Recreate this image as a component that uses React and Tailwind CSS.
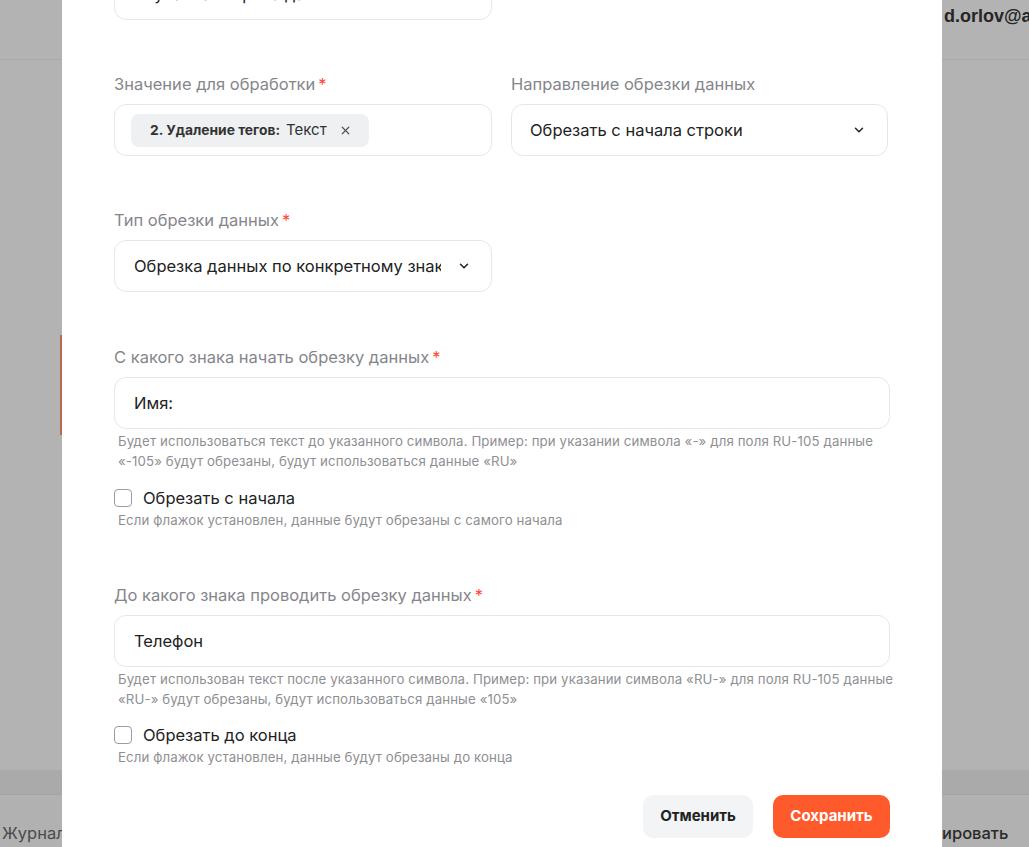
import { ChevronDown, X } from "lucide-react";

function Label({ children, required }) {
  return (
    <div className="h-6 text-[16.5px] leading-6 text-[#85868b] mb-2 whitespace-nowrap">
      {children}
      {required && <span className="ml-[3px] text-[#ff4a35]">*</span>}
    </div>
  );
}

function Field({ children, className = "" }) {
  return (
    <div className={`h-[52px] rounded-xl border border-[#e6e7ea] bg-white flex items-center ${className}`}>
      {children}
    </div>
  );
}

function Hint({ children, className = "" }) {
  return (
    <div className={`text-[13.25px] tracking-[0.11px] leading-5 text-[#8e8f93] whitespace-nowrap ${className}`}>
      {children}
    </div>
  );
}

function Check({ label }) {
  return (
    <label className="flex items-center h-6 gap-[11px]">
      <span className="w-[18px] h-[18px] rounded-[4px] border border-[#9c9ca0] bg-white" />
      <span className="text-[16.5px] text-[#222]">{label}</span>
    </label>
  );
}

export default function App() {
  return (
    <div className="relative h-[847px] w-full overflow-hidden bg-[#b3b3b3] font-['Inter',sans-serif]">
      {/* dimmed page behind */}
      <div className="flex flex-col h-full">
        <header className="h-[60px] shrink-0 border-b border-[#a9a9a9] pl-[944px] pt-[3px] whitespace-nowrap overflow-hidden">
          <span className="text-[18px] font-bold text-[#262626] font-['Liberation_Sans',sans-serif]">d.orlov@aspro.ru</span>
        </header>
        <main className="flex-1 relative">
          <div className="absolute left-[60px] top-[275px] w-[3px] h-[100px] bg-[#b8694f]" />
        </main>
        <div className="h-[25px] bg-[#aaaaaa] border-b border-[#a3a3a3]" />
        <div className="h-[52px] bg-[#b1b1b1] flex items-end justify-between pb-[1px] text-[16.5px] whitespace-nowrap">
          <span className="text-[#4a4a4a] pl-[2px]">Журнал</span>
          <span className="text-[#2a2a2a] font-medium w-[87px] overflow-hidden">ировать</span>
        </div>
      </div>

      {/* modal */}
      <div className="absolute top-0 bottom-0 left-[62px] w-[880px] bg-white overflow-hidden">
        <div className="-mt-[32px] px-[52px]">
          <Field className="w-[378px] pl-[18px]">
            <span className="text-[16.5px] text-[#222]">Случайная строка данных</span>
          </Field>

          <div className="grid grid-cols-[378px_377px] gap-x-[19px] mt-[52px]">
            <div>
              <Label required>Значение для обработки</Label>
              <Field className="pl-[16px]">
                <div className="h-[33px] rounded-lg bg-[#eef0f2] flex items-center pl-[19px] pr-[17px] text-[#333]">
                  <span className="text-[13.8px] font-bold">2. Удаление тегов:</span>
                  <span className="text-[15px] ml-[6px]">Текст</span>
                  <X className="ml-[12px] w-[13px] h-[13px] text-[#555]" strokeWidth={2.2} />
                </div>
              </Field>
            </div>
            <div>
              <Label>Направление обрезки данных</Label>
              <Field className="pl-[18px] pr-[21px] justify-between">
                <span className="text-[16.5px] text-[#222]">Обрезать с начала строки</span>
                <ChevronDown className="w-[14px] h-[14px] text-[#222]" strokeWidth={2.5} />
              </Field>
            </div>
          </div>

          <div className="mt-[52px] w-[378px]">
            <Label required>Тип обрезки данных</Label>
            <Field className="pl-[19px] pr-[20px] justify-between">
              <span className="text-[16.5px] text-[#222] whitespace-nowrap overflow-hidden w-[307px]">
                Обрезка данных по конкретному знаку
              </span>
              <ChevronDown className="w-[14px] h-[14px] text-[#222]" strokeWidth={2.5} />
            </Field>
          </div>

          <div className="mt-[53px]">
            <Label required>С какого знака начать обрезку данных</Label>
            <Field className="pl-[19px]">
              <span className="text-[16.5px] text-[#222]">Имя:</span>
            </Field>
            <Hint className="mt-[2px] pl-[4px]">
              Будет использоваться текст до указанного символа. Пример: при указании символа «-» для поля RU-105 данные
              <br />
              «-105» будут обрезаны, будут использоваться данные «RU»
            </Hint>
            <div className="mt-[15px]">
              <Check label="Обрезать с начала" />
            </div>
            <Hint className="pl-[4px]">Если флажок установлен, данные будут обрезаны с самого начала</Hint>
          </div>

          <div className="mt-[53px]">
            <Label required>До какого знака проводить обрезку данных</Label>
            <Field className="pl-[19px]">
              <span className="text-[16.5px] text-[#222]">Телефон</span>
            </Field>
            <Hint className="mt-[2px] pl-[4px]">
              Будет использован текст после указанного символа. Пример: при указании символа «RU-» для поля RU-105 данные
              <br />
              «RU-» будут обрезаны, будут использоваться данные «105»
            </Hint>
            <div className="mt-[14px]">
              <Check label="Обрезать до конца" />
            </div>
            <Hint className="pl-[4px]">Если флажок установлен, данные будут обрезаны до конца</Hint>
          </div>

          <div className="mt-[28px] flex justify-end gap-5">
            <button className="h-[43px] w-[110px] rounded-[10px] bg-[#f3f4f6] text-[15px] font-bold text-[#222]">
              Отменить
            </button>
            <button className="h-[43px] w-[117px] rounded-[10px] bg-[#ff5a2b] text-[15px] font-bold text-white">
              Сохранить
            </button>
          </div>
        </div>
      </div>
    </div>
  );
}
